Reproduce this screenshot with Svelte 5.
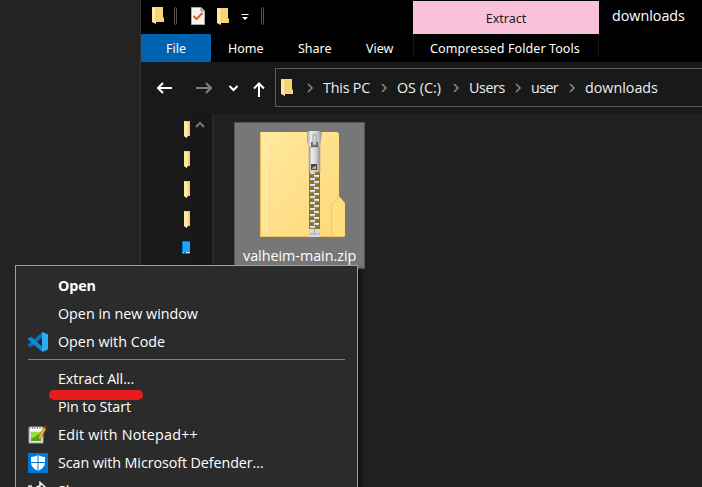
<script>
  const crumbs = [
    { text: 'This PC', width: 74, track: -0.2 },
    { text: 'OS (C:)', width: 72, track: 0 },
    { text: 'Users', width: 62, track: -0.4 },
    { text: 'user', width: 54, track: -0.6 },
    { text: 'downloads', width: 100, track: 0 }
  ];
  const menu = [
    { text: 'Open', bold: true, track: -0.1 },
    { text: 'Open in new window', track: 0 },
    { text: 'Open with Code', icon: 'code', track: 0 },
    { divider: true },
    { text: 'Extract All...', marked: true, track: -0.1 },
    { text: 'Pin to Start', track: -0.08 },
    { text: 'Edit with Notepad++', icon: 'notepad', track: 0.23 },
    { text: 'Scan with Microsoft Defender...', icon: 'shield', track: -0.08 },
    { text: 'Share', icon: 'share', track: 0 }
  ];
  const teeth = Array.from({ length: 19 }, (_, i) => i);
</script>

{#snippet folder()}
  <svg class="folder" width="12" height="17" viewBox="0 0 12 17">
    <path d="M0 0H11V10L12 11V15H0Z" fill="#f7d575" />
    <path d="M0 0L4 2V17L0 15Z" fill="#ffe9a4" />
    <path d="M4 3V15" stroke="#e9bd55" stroke-width=".6" />
  </svg>
{/snippet}

<div class="desktop">
  <div class="window">
    <header>
      <div class="left">
        <div class="quick">
          {@render folder()}
          <i class="sep"></i>
          <svg class="check" width="14" height="18" viewBox="0 0 14 18">
            <path d="M.5 .5H10L13.500 4V17.500H.5Z" fill="#f5f5f5" stroke="#aaa" />
            <path d="M10 .5V4H13.500" fill="#ccc" stroke="#8b8b8b" />
            <path d="M2.500 9L5.500 12L11.500 6" fill="none" stroke="#ee5a20" stroke-width="2" />
          </svg>
          {@render folder()}
          <svg class="drop" width="8" height="7" viewBox="0 0 8 7"><path d="M.5 0H7.500V1H.5ZM1 3H7L4 6Z" fill="#fff" /></svg>
          <i class="sep"></i>
        </div>
        <nav class="tabs">
          <span class="file">File</span><span class="home">Home</span><span class="share">Share</span><span>View</span>
        </nav>
      </div>
      <div class="tools">
        <div class="extract">Extract</div>
        <div class="compressed">Compressed Folder Tools</div>
      </div>
      <div class="title">downloads</div>
    </header>

    <div class="bar">
      <svg class="arrows" width="134" height="40" viewBox="0 0 134 40" fill="none" stroke="#fff" stroke-width="2">
        <path d="M31 14H17.500M22 9L17 14L22 19" />
        <path d="M55 14H69.500M65 9L70 14L65 19" stroke="#808080" />
        <path d="M88.500 12L92.500 16L96.500 12" />
        <path d="M118 23V9.500M113 14.500L118 9.500L123 14.500" />
      </svg>
      <div class="address">
        {@render folder()}
        {#each crumbs as c}
          <div class="crumb" style="width:{c.width}px;letter-spacing:{c.track}px">
            <svg width="14" height="10" viewBox="0 0 14 10"><path d="M1 1L5 5L1 9" fill="none" stroke="#858585" stroke-width="1.600" /></svg>
            <span>{c.text}</span>
          </div>
        {/each}
      </div>
    </div>

    <div class="body">
      <div class="tree">
        {#each [0, 1, 2, 3] as n}
          <svg class="leaf" width="6" height="17" viewBox="0 0 6 17"><path d="M0 0H6V15H3V17L0 15Z" fill="#f0cd70" /><path d="M0 0L4 2V14L3 17L0 15Z" fill="#ffe8a3" /></svg>
        {/each}
        <svg class="desk" width="8" height="13" viewBox="0 0 8 13"><path d="M0 0H8V13H0Z" fill="#0078d0" /><path d="M1 1H8V11H1Z" fill="#20a5fa" /><path d="M1 11.500H2M4 11.500H8" stroke="#bce6ff" /></svg>
      </div>
      <div class="scroll">
        <svg width="10" height="7" viewBox="0 0 10 7"><path d="M1 6L5 2L9 6" fill="none" stroke="#777" stroke-width="2" /></svg>
      </div>
      <main>
        <div class="zip">
          <svg width="86" height="108" viewBox="0 0 86 108">
            <defs>
              <linearGradient id="yellow" x2="1" y2="1"><stop stop-color="#ffe99f" /><stop offset=".5" stop-color="#ffe08b" /><stop offset="1" stop-color="#fdd878" /></linearGradient>
              <linearGradient id="metal" x2="1"><stop stop-color="#a0a0a0" /><stop offset=".25" stop-color="#ededed" /><stop offset=".65" stop-color="#cecece" /><stop offset="1" stop-color="#969696" /></linearGradient>
            </defs>
            <path d="M0 2H76Q79 2 79 5V66L85 73V105Q85 107 82 107H0Z" fill="url(#yellow)" />
            <path d="M71 107V74L78 67L85 74V105Q85 107 82 107Z" fill="#ffdc7c" />
            <path d="M71.500 106V74L78.500 67" fill="none" stroke="#efc660" />
            <path d="M.5 2V106.500H84" fill="none" stroke="#efc563" />
            <path d="M3.500 6V103M6.500 6V103" stroke="#fff0b7" stroke-width=".7" />
            <path d="M49 42H60V99H49Z" fill="#887333" />
            {#each teeth as n}
              <path d={n % 2 ? 'M54 0H59V2H54Z' : 'M50 0H55V2H50Z'} transform="translate(0 {42 + n * 3})" fill="#eee" />
              <path d={n % 2 ? 'M54 2H59' : 'M50 2H55'} transform="translate(0 {42 + n * 3})" stroke="#aaa" stroke-width=".8" />
            {/each}
            <path d="M49 99H60V107H49Z" fill="#d8d8d8" />
            <path d="M54.500 99V104M49 104H60" stroke="#aaa" />
            <path d="M47 2Q48 1 51 1H58Q61 1 62 3L60 18H49L47 11Z" fill="url(#metal)" />
            <path d="M49 17H60V42H49Z" fill="url(#metal)" stroke="#999" stroke-width=".6" />
            <path d="M51 12H58V17H51Z" fill="#666" />
            <path d="M53 5Q54.500 3 56 5V15H53Z" fill="#ddd" stroke="#999" />
            <path d="M51 34H57V40H51Z" fill="#4e493a" /><path d="M52 38L55 36H56V39H52Z" fill="#bbb17f" />
          </svg>
          <span>valheim-main.zip</span>
        </div>
      </main>
    </div>
  </div>

  <div class="menu">
    {#each menu as m}
      {#if m.divider}
        <hr />
      {:else}
        <div class="item" class:bold={m.bold} style="letter-spacing:{m.track}px">
          <div class="icon">
            {#if m.icon === 'code'}
              <svg width="20" height="20" viewBox="0 0 20 20"><path d="M14.500 5L4 14.500L2.500 15L0 13.500V12.500L14.500 0Z" fill="#0873b8" /><path d="M14.500 15L4 5.500L2.500 5L0 6.500V7.500L14.500 20Z" fill="#098bd3" /><path d="M14.500 0L20 2.500V17.500L14.500 20L14 19V1Z" fill="#29adf3" /></svg>
            {:else if m.icon === 'notepad'}
              <svg width="20" height="20" viewBox="0 0 20 20"><path d="M1 2H15V18H1Z" fill="#e6e8e4" stroke="#a3a3a3" /><path d="M3 7H13V16H3Z" fill="#9bd941" /><path d="M3 14L13 8V16H3Z" fill="#51a819" /><path d="M2 4H14" stroke="#fff" stroke-width="3" /><path d="M2 1V4M4.500 1V4M7 1V4M9.500 1V4M12 1V4" stroke="#777" /><path d="M10 15L11 11L16 2L18 4L13 13Z" fill="#efbb35" stroke="#8f6518" stroke-width=".6" /><path d="M16 2L17 0L19 1L18 4Z" fill="#a31d18" /></svg>
            {:else if m.icon === 'shield'}
              <svg width="20" height="20" viewBox="0 0 20 20"><path d="M0 0H20V20H0Z" fill="#0078d7" /><path d="M10 2Q13 4 17 4V9Q17 15 10 18Q3 15 3 9V4Q7 4 10 2Z" fill="#fff" /><path d="M10 2V18M3 9.500H17" stroke="#0078d7" /></svg>
            {:else if m.icon === 'share'}
              <svg width="20" height="20" viewBox="0 0 20 20" fill="none" stroke="#eee" stroke-width="1.600"><path d="M6 12Q7 5 12 5V1.500L17.500 6.500L12 12V9Q9 9 6 12Z" /><path d="M4 5H1V19H16V14" /></svg>
            {/if}
          </div>
          <span>{m.text}</span>
          {#if m.marked}<i class="mark"></i>{/if}
        </div>
      {/if}
    {/each}
  </div>
</div>

<style>
  :global(body) { margin: 0; overflow: hidden; }
  .desktop { position: relative; width: 702px; height: 487px; overflow: hidden; background: #232323; color: #fff; font: 14.300px/20px "Open Sans", "Noto Sans", sans-serif; box-sizing: border-box; padding-left: 140px; }
  .desktop * { box-sizing: border-box; }
  svg { display: block; flex: none; }
  .window { width: 562px; height: 487px; border-left: 1px solid #333; background: #191919; display: flex; flex-direction: column; }
  header { height: 62px; flex: none; background: #000; display: flex; }
  .left { width: 272px; }
  .quick { height: 34px; display: flex; align-items: flex-start; padding: 7px 0 0 11px; }
  .sep { width: 3px; height: 18px; border: 1px solid #555; border-radius: 2px; margin-left: 10px; }
  .check { margin: 0 12px 0 14px; }
  .quick .folder { margin-top: 1px; }
  .quick .folder:first-child { margin-top: 0; }
  .drop { margin: 7px 2px 0 12px; }
  .tabs { display: flex; height: 28px; font: 12.500px/29px "Noto Sans", sans-serif; }
  .file { width: 70px; background: #0063b1; text-align: center; }
  .home { margin-left: 17px; width: 70px; }
  .share { width: 68px; }
  .tools { width: 186px; padding-top: 1px; font: 12.500px/28px "Noto Sans", sans-serif; text-align: center; }
  .extract { height: 33px; line-height: 35px; color: #202020; background: #fac1db; }
  .compressed { height: 23px; line-height: 29px; border: solid #171717; border-width: 0 1px; white-space: nowrap; letter-spacing: .1px; text-indent: -2px; }
  .title { padding: 6px 0 0 13px; }
  .bar { height: 52px; flex: none; display: flex; padding-top: 6px; }
  .arrows { margin-top: 6px; }
  .address { width: 427px; height: 39px; border: 1px solid #5b5b5b; border-right: 0; display: flex; align-items: center; padding-left: 5px; }
  .address .folder { margin-right: 14px; }
  .crumb { display: flex; align-items: center; white-space: nowrap; color: #eee; }
  .crumb svg { margin-right: 2px; }
  .body { flex: 1; min-height: 0; display: flex; }
  .tree { width: 49px; padding: 7px 0 0 43px; }
  .leaf { margin-bottom: 13px; }
  .desk { margin: 2px 0 0 -2px; }
  .scroll { width: 22px; background: #171717; padding: 7px 0 0 5px; }
  main { flex: 1; border-left: 2px solid #292929; background: #202020; padding: 8px 0 0 20px; }
  .zip { width: 131px; height: 147px; background: #777; border: 1px solid #555; padding: 7px 0 0 25px; }
  .zip span { display: block; width: 115px; margin: 9px 0 0 -17px; white-space: nowrap; line-height: 18px; }
  .menu { position: absolute; left: 15px; top: 265px; width: 343px; height: 250px; border: 1px solid #a0a0a0; background: #2b2b2b; box-shadow: 4px 4px 4px #0006; padding: 6px 11px; }
  .item { height: 28px; display: flex; align-items: center; position: relative; white-space: nowrap; }
  .icon { width: 31px; padding-left: 1px; }
  .bold { font-weight: 700; }
  hr { height: 1px; border: 0; margin: 3px 1px 5px; background: #808080; }
  .mark { position: absolute; left: 22px; top: 25px; width: 94px; height: 10px; border-radius: 5px; background: #e61b1b; }
</style>
